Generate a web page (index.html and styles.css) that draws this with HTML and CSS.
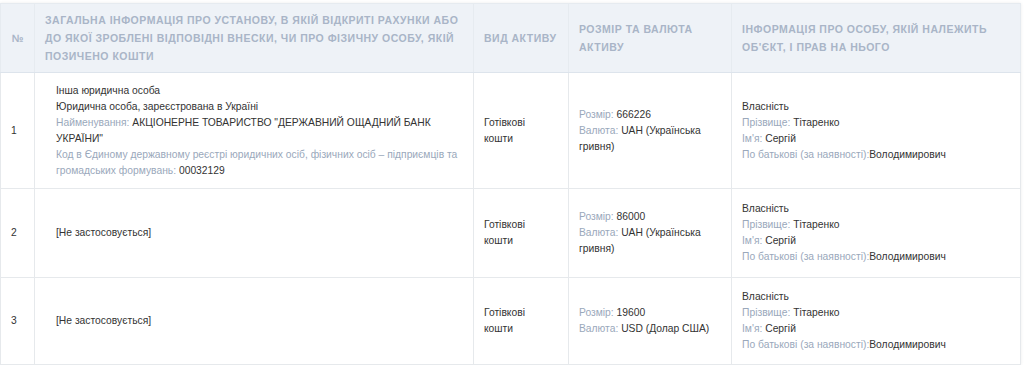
FILE: index.html
```html
<!DOCTYPE html>
<html lang="uk">
<head>
<meta charset="utf-8">
<link rel="stylesheet" href="styles.css">
</head>
<body>
<div class="wrap">
<table class="decl">
<colgroup>
<col class="c-num"><col class="c-info"><col class="c-type"><col class="c-size"><col class="c-owner">
</colgroup>
<thead>
<tr>
<th class="num">№</th>
<th>Загальна інформація про установу, в якій відкриті рахунки або до якої зроблені відповідні внески, чи про фізичну особу, якій позичено кошти</th>
<th>Вид активу</th>
<th>Розмір та валюта активу</th>
<th>Інформація про особу, якій належить об'єкт, і прав на нього</th>
</tr>
</thead>
<tbody>
<tr class="r1">
<td class="num">1</td>
<td class="info">
<div>Інша юридична особа</div>
<div>Юридична особа, зареєстрована в Україні</div>
<div><span class="lbl">Найменування:</span> АКЦІОНЕРНЕ ТОВАРИСТВО "ДЕРЖАВНИЙ ОЩАДНИЙ БАНК УКРАЇНИ"</div>
<div><span class="lbl">Код в Єдиному державному реєстрі юридичних осіб, фізичних осіб – підприємців та громадських формувань:</span> 00032129</div>
</td>
<td class="type">Готівкові кошти</td>
<td><div><span class="lbl">Розмір:</span> 666226</div><div><span class="lbl">Валюта:</span> UAH (Українська гривня)</div></td>
<td><div>Власність</div><div><span class="lbl">Прізвище:</span> Тітаренко</div><div><span class="lbl">Ім'я:</span> Сергій</div><div><span class="lbl">По батькові (за наявності):</span>Володимирович</div></td>
</tr>
<tr class="r2">
<td class="num">2</td>
<td class="info">[Не застосовується]</td>
<td class="type">Готівкові кошти</td>
<td><div><span class="lbl">Розмір:</span> 86000</div><div><span class="lbl">Валюта:</span> UAH (Українська гривня)</div></td>
<td><div>Власність</div><div><span class="lbl">Прізвище:</span> Тітаренко</div><div><span class="lbl">Ім'я:</span> Сергій</div><div><span class="lbl">По батькові (за наявності):</span>Володимирович</div></td>
</tr>
<tr class="r3">
<td class="num">3</td>
<td class="info">[Не застосовується]</td>
<td class="type">Готівкові кошти</td>
<td><div><span class="lbl">Розмір:</span> 19600</div><div><span class="lbl">Валюта:</span> USD (Долар США)</div></td>
<td><div>Власність</div><div><span class="lbl">Прізвище:</span> Тітаренко</div><div><span class="lbl">Ім'я:</span> Сергій</div><div><span class="lbl">По батькові (за наявності):</span>Володимирович</div></td>
</tr>
</tbody>
</table>
</div>
</body>
</html>
```
FILE: styles.css
```css
html, body {
  margin: 0;
  padding: 0;
  background: #ffffff;
}
.wrap {
  padding: 3px 4px 0 0;
}
.decl {
  width: 1020px;
  table-layout: fixed;
  border-collapse: collapse;
  font-family: "Liberation Sans", Arial, sans-serif;
  font-size: 10.3px;
  color: #333333;
  box-shadow: 0 0 3px rgba(0, 0, 0, 0.08);
}
.c-num { width: 34px; }
.c-info { width: 439px; }
.c-type { width: 95px; }
.c-size { width: 163px; }
.c-owner { width: 289px; }

.decl th {
  background: #eef2f7;
  color: #a9b5c7;
  font-weight: bold;
  font-size: 10.5px;
  text-transform: uppercase;
  letter-spacing: 0.5px;
  text-align: left;
  line-height: 18px;
  padding: 6px 10px 6px;
  height: 56px;
  border: 1px solid #e6ebf0;
  border-bottom: 1px solid #dde4ec;
  vertical-align: middle;
}
.decl th.num {
  padding: 0;
  text-align: center;
  letter-spacing: 0;
}
.decl td {
  border: 1px solid #e6e9ec;
  padding: 8px 10px;
  line-height: 16px;
  vertical-align: middle;
}
.decl td.num {
  padding: 0 0 0 10px;
}
.decl td.info {
  padding-left: 21px;
  padding-right: 12px;
}
.decl td.type {
  padding-right: 30px;
}
.r1 td { height: 99px; }
.r2 td { height: 72px; }
.r3 td { height: 70px; }
.lbl {
  color: #9aa8bb;
}
```
